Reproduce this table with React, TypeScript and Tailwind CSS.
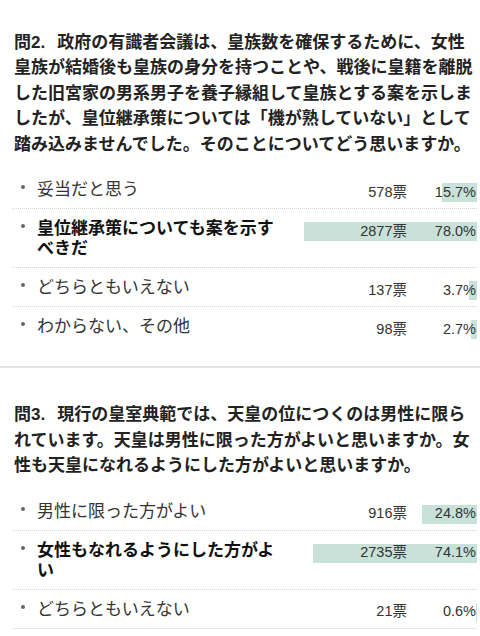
import React from 'react';

type Option = { label: string; votes: number; pct: number; top?: boolean };

const q2Lines = [
  '政府の有識者会議は、皇族数を確保するために、女性',
  '皇族が結婚後も皇族の身分を持つことや、戦後に皇籍を離脱',
  'した旧宮家の男系男子を養子縁組して皇族とする案を示しま',
  'したが、皇位継承策については「機が熟していない」として',
  '踏み込みませんでした。そのことについてどう思いますか。',
];

const q2Options: Option[] = [
  { label: '妥当だと思う', votes: 578, pct: 15.7 },
  { label: '皇位継承策についても案を示すべきだ', votes: 2877, pct: 78.0, top: true },
  { label: 'どちらともいえない', votes: 137, pct: 3.7 },
  { label: 'わからない、その他', votes: 98, pct: 2.7 },
];

const q3Lines = [
  '現行の皇室典範では、天皇の位につくのは男性に限ら',
  'れています。天皇は男性に限った方がよいと思いますか。女',
  '性も天皇になれるようにした方がよいと思いますか。',
];

const q3Options: Option[] = [
  { label: '男性に限った方がよい', votes: 916, pct: 24.8 },
  { label: '女性もなれるようにした方がよい', votes: 2735, pct: 74.1, top: true },
  { label: 'どちらともいえない', votes: 21, pct: 0.6 },
];

function Question({ no, lines }: { no: number; lines: string[] }) {
  return (
    <h2 className="px-[14px] text-[17px] leading-[25.5px] font-bold text-[#222] whitespace-nowrap">
      {lines.map((line, i) => (
        <div key={i}>
          {i === 0 ? (
            <>
              問{no}.<span className="inline-block w-[12px]" />
            </>
          ) : null}
          {line}
        </div>
      ))}
    </h2>
  );
}

function Row({ option, last, lastSolid }: { option: Option; last: boolean; lastSolid?: boolean }) {
  const border = !last
    ? 'border-b border-dotted border-[#d2d2d2]'
    : lastSolid
    ? 'border-b border-solid border-[#e8e8e8]'
    : '';
  return (
    <li className={'flex items-start pt-[10px] pb-[8px] ' + border}>
      <div className="flex w-[25px] h-[20px] shrink-0 items-center pl-[9px] pb-[6px]">
        <span className="w-[4px] h-[4px] rounded-full bg-[#666]" />
      </div>
      <div
        className={
          'w-[240px] shrink-0 text-[17px] leading-[20px] ' +
          (option.top ? 'font-bold text-[#111]' : 'text-[#333]')
        }
      >
        {option.label}
      </div>
      <div className="relative ml-auto mt-[3px] -mb-[2px] h-[19px] w-[200px]">
        <div
          className="absolute right-0 top-0 h-full bg-[#c8e2d9]"
          style={{ width: `${option.pct * 2.22}px` }}
        />
        <div className="relative flex h-full items-center justify-end text-[14.5px] text-[#333]">
          <span>{option.votes}票</span>
          <span className="w-[70px] pr-[1px] text-right">{option.pct.toFixed(1)}%</span>
        </div>
      </div>
    </li>
  );
}

function Options({ options, lastSolid }: { options: Option[]; lastSolid?: boolean }) {
  return (
    <ul className="mt-[13px] ml-[12px] w-[465px]">
      {options.map((o, i) => (
        <Row key={o.label} option={o} last={i === options.length - 1} lastSolid={lastSolid} />
      ))}
    </ul>
  );
}

export default function App() {
  return (
    <div className="w-[480px] h-[636px] overflow-hidden bg-white font-['Liberation_Sans','Noto_Sans_CJK_JP',sans-serif]">
      <section className="pt-[29.5px] pb-[21px]">
        <Question no={2} lines={q2Lines} />
        <Options options={q2Options} />
      </section>
      <div className="h-[2px] bg-[#e4e4e4]" />
      <section className="pt-[34px]">
        <Question no={3} lines={q3Lines} />
        <Options options={q3Options} lastSolid />
      </section>
    </div>
  );
}
